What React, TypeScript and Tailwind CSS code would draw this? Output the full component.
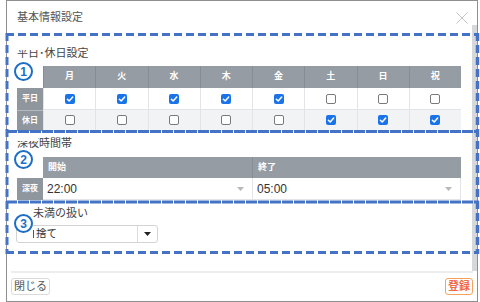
import React from "react";

const days = ["月", "火", "水", "木", "金", "土", "日", "祝"];
const weekday = [true, true, true, true, true, false, false, false];
const holiday = [false, false, false, false, false, true, true, true];

function Check({ on }: { on: boolean }) {
  if (on) {
    return (
      <span className="w-[10px] h-[10px] rounded-[2px] bg-[#1a73e8] flex items-center justify-center">
        <svg width="10" height="10" viewBox="0 0 10 10">
          <path d="M2.4 5.3 L4.2 7 L7.7 3" stroke="white" strokeWidth="1.5" fill="none" strokeLinecap="round" strokeLinejoin="round" />
        </svg>
      </span>
    );
  }
  return <span className="w-[10px] h-[10px] rounded-[2px] border border-[#7a7a7a] bg-white" />;
}

function Circled({ n, top }: { n: string; top: string }) {
  return (
    <div
      className={`absolute left-[14px] ${top} w-[19px] h-[19px] rounded-full border-[2.5px] border-[#1d6fc6] bg-white flex items-center justify-center text-[12px] font-bold text-[#1d6fc6] leading-none`}
    >
      {n}
    </div>
  );
}

export default function App() {
  return (
    <div className="relative w-[480px] h-[302px] bg-white overflow-hidden font-['Liberation_Sans','Noto_Sans_CJK_JP',sans-serif]">
      <div className="ml-[6px] w-[472px] h-[302px] border border-[#8f8f8f] flex flex-col">
        <div className="flex h-[270px]">
          <div className="w-[465px] flex flex-col">
            {/* header */}
            <div className="h-[33px] flex items-center justify-between pl-[10px] pr-[4px]">
              <span className="text-[11px] text-[#555]">基本情報設定</span>
              <svg width="12" height="12" viewBox="0 0 12 12">
                <path d="M0.5 0.5 L11.5 11.5 M11.5 0.5 L0.5 11.5" stroke="#c4c4c4" strokeWidth="1" />
              </svg>
            </div>
            {/* body */}
            <div className="pl-[10px] flex flex-col">
              <div className="mt-[12px] h-[14px] leading-[14px] text-[11px] text-[#444]">平日･休日設定</div>
              <div className="mt-[6px] w-[444px] grid grid-cols-[26px_repeat(8,minmax(0,1fr))]">
                <div className="h-[22px]" />
                {days.map((d) => (
                  <div key={d} className="h-[22px] bg-[#959ca4] border-l border-[#868d95] flex items-center justify-center text-white text-[9px] font-bold">
                    {d}
                  </div>
                ))}
                <div className="h-[22px] bg-[#8f969e] flex items-center justify-center text-white text-[8px] font-bold">平日</div>
                {weekday.map((v, i) => (
                  <div key={i} className="h-[22px] bg-white border-l border-b border-[#e2e4e7] flex items-center justify-center">
                    <Check on={v} />
                  </div>
                ))}
                <div className="h-[21px] bg-[#8f969e] border-t border-[#b5bac0] flex items-center justify-center text-white text-[8px] font-bold">休日</div>
                {holiday.map((v, i) => (
                  <div key={i} className="h-[21px] bg-[#f1f3f5] border-l border-b border-[#e2e4e7] flex items-center justify-center">
                    <Check on={v} />
                  </div>
                ))}
              </div>

              <div className="mt-[5px] h-[14px] leading-[14px] text-[11px] text-[#444]">深夜時間帯</div>
              <div className="mt-[7px] w-[444px] grid grid-cols-[26px_1fr_1fr]">
                <div className="h-[21px]" />
                <div className="h-[21px] bg-[#959ca4] flex items-center pl-[5px] text-white text-[9px] font-bold">開始</div>
                <div className="h-[21px] bg-[#959ca4] border-l border-[#868d95] flex items-center pl-[5px] text-white text-[9px] font-bold">終了</div>
                <div className="h-[22px] bg-[#8f969e] flex items-center justify-center text-white text-[8px] font-bold">深夜</div>
                <div className="h-[22px] bg-white border-b border-[#e2e4e7] flex items-center justify-between pl-[4px] pr-[8px]">
                  <span className="text-[12px] text-[#333]">22:00</span>
                  <svg width="7" height="4" viewBox="0 0 7 4"><path d="M0 0 L7 0 L3.5 4 Z" fill="#b8b8b8" /></svg>
                </div>
                <div className="h-[22px] bg-white border-l border-r border-b border-[#e2e4e7] flex items-center justify-between pl-[4px] pr-[8px]">
                  <span className="text-[12px] text-[#333]">05:00</span>
                  <svg width="7" height="4" viewBox="0 0 7 4"><path d="M0 0 L7 0 L3.5 4 Z" fill="#b8b8b8" /></svg>
                </div>
              </div>

              <div className="mt-[6px] h-[14px] flex">
                <div className="w-[16px] shrink-0" />
                <span className="leading-[14px] text-[11px] text-[#444] whitespace-nowrap">未満の扱い</span>
              </div>
              <div className="mt-[5px] ml-[-1px] w-[142px] h-[18px] border border-[#d4d4d4] rounded-[3px] flex items-center">
                <div className="w-[16px] shrink-0" />
                <div className="flex-1 flex items-center">
                  <span className="w-[1px] h-[8px] bg-[#555] mr-[2px]" />
                  <span className="text-[10.5px] text-[#333] whitespace-nowrap">捨て</span>
                </div>
                <div className="w-[20px] h-full border-l border-[#dcdcdc] flex items-center justify-center">
                  <svg width="7" height="4" viewBox="0 0 7 4"><path d="M0 0 L7 0 L3.5 4 Z" fill="#222" /></svg>
                </div>
              </div>
            </div>
          </div>
          <div className="w-[5px] mt-[24px] h-[246px] bg-[#d6d9dc]" />
        </div>
        {/* footer */}
        <div className="mx-[4px] border-t-2 border-[#ededed] flex justify-between pt-[5px]">
          <button className="h-[17px] px-[2px] border border-[#dadada] rounded-[3px] bg-white text-[11px] text-[#555] leading-none">閉じる</button>
          <button className="h-[17px] px-[2px] border-[1.5px] border-[#f7a25c] rounded-[3px] bg-white text-[11px] font-bold text-[#f2694a] leading-none">登録</button>
        </div>
      </div>

      {/* annotation covers */}
      <div className="absolute left-[15px] top-[43px] w-[24px] h-[7px] bg-white" />
      <div className="absolute left-[15px] top-[134px] w-[23px] h-[7px] bg-white" />

      <Circled n="1" top="top-[62px]" />
      <Circled n="2" top="top-[150px]" />
      <Circled n="3" top="top-[214px]" />

      <svg className="absolute left-0 top-0 pointer-events-none" width="480" height="302" viewBox="0 0 480 302">
        <g stroke="#4472c4" fill="none">
          <line x1="6" y1="34.5" x2="479" y2="34.5" strokeWidth="3" strokeDasharray="8 4" />
          <line x1="7" y1="33" x2="7" y2="254" strokeWidth="3" strokeDasharray="8 4" />
          <line x1="477.5" y1="33" x2="477.5" y2="254" strokeWidth="3.5" strokeDasharray="8 4" />
          <line x1="6" y1="131.5" x2="479" y2="131.5" strokeWidth="3" strokeDasharray="11 1" />
          <line x1="6" y1="202" x2="479" y2="202" strokeWidth="3" strokeDasharray="11 1" />
          <line x1="6" y1="252.5" x2="479" y2="252.5" strokeWidth="3" strokeDasharray="8 4" />
        </g>
      </svg>
    </div>
  );
}
